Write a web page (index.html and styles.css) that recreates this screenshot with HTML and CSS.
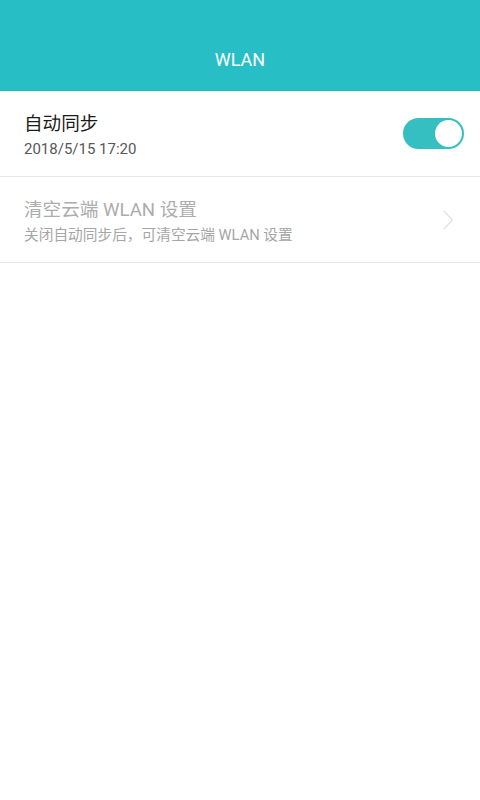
FILE: index.html
```html
<!DOCTYPE html>
<html lang="zh-CN">
<head>
<meta charset="utf-8">
<title>WLAN</title>
<link rel="stylesheet" href="styles.css">
</head>
<body>
<header class="appbar">
  <h1 class="appbar-title">WLAN</h1>
</header>
<main class="list">
  <div class="item">
    <div class="item-text">
      <div class="item-title">自动同步</div>
      <div class="item-sub">2018/5/15 17:20</div>
    </div>
    <div class="switch on"><span class="knob"></span></div>
  </div>
  <div class="item disabled">
    <div class="item-text">
      <div class="item-title">清空云端 WLAN 设置</div>
      <div class="item-sub">关闭自动同步后，可清空云端 WLAN 设置</div>
    </div>
    <svg class="chevron" width="12" height="22" viewBox="0 0 12 22"><path d="M1.5 1.5 L10.5 11 L1.5 20.5" fill="none" stroke="#e2e2e2" stroke-width="1.3"/></svg>
  </div>
</main>
</body>
</html>
```
FILE: styles.css
```css
* { box-sizing: border-box; }
html, body { margin: 0; padding: 0; }
body {
  width: 480px;
  height: 800px;
  background: #ffffff;
  font-family: Roboto, "Noto Sans CJK SC", sans-serif;
}
.appbar {
  height: 91px;
  background: #28bec5;
  border-bottom: 1px solid #25b7be;
  display: flex;
  align-items: flex-end;
  justify-content: center;
  padding-bottom: 18px;
}
.appbar-title {
  margin: 0;
  font-size: 18px;
  font-weight: 400;
  color: #ffffff;
  line-height: 24px;
}
.item {
  height: 86px;
  border-bottom: 1px solid #e8e8e8;
  display: flex;
  align-items: center;
  padding: 0 16px 0 24px;
}
.item-text { flex: 1; display: flex; flex-direction: column; gap: 3px; padding-top: 3px; }
.item-title {
  font-size: 18.6px;
  line-height: 24px;
  color: #1b1b1b;
}
.item-sub {
  font-size: 15px;
  line-height: 20px;
  color: #575757;
}
.disabled .item-title { color: #acacac; }
.disabled .item-sub { color: #a6a6a6; font-size: 14.7px; }
.switch {
  width: 61px;
  height: 31px;
  border-radius: 16px;
  background: #36bfc1;
  position: relative;
}
.knob {
  position: absolute;
  right: 2px;
  top: 2px;
  width: 27px;
  height: 27px;
  border-radius: 50%;
  background: #ffffff;
}
.chevron { margin-right: 10px; }
```
